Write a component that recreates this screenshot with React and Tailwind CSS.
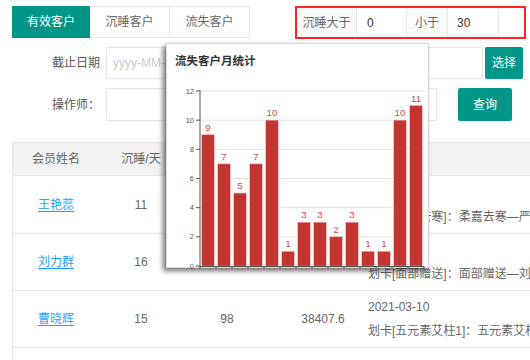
import React from "react";

const vals = [9, 7, 5, 7, 10, 1, 3, 3, 2, 3, 1, 1, 10, 11];

function Chart() {
  const X0 = 33;
  const Y0 = 192;
  const unit = 175 / 12;
  const pitch = 16;
  const W = X0 + pitch * vals.length;
  return (
    <svg width="263" height="195" viewBox="0 0 263 195" className="block">
      {[2, 4, 6, 8, 10, 12].map((v) => (
        <line key={"g" + v} x1={X0} x2={W} y1={Y0 - v * unit} y2={Y0 - v * unit} stroke="#e3e3e3" strokeWidth="1" />
      ))}
      {[0, 2, 4, 6, 8, 10, 12].map((v) => (
        <g key={"y" + v}>
          <line x1={X0 - 4} x2={X0} y1={Y0 - v * unit} y2={Y0 - v * unit} stroke="#555" strokeWidth="1" />
          <text x={X0 - 6} y={Y0 - v * unit + 2.6} textAnchor="end" fontSize="7.5" fill="#555" fontFamily="Liberation Sans, sans-serif">
            {v}
          </text>
        </g>
      ))}
      {vals.map((v, i) => {
        const x = X0 + pitch * i + 1.8;
        const h = v * unit;
        return (
          <g key={"b" + i}>
            <rect x={x} y={Y0 - h} width={12.4} height={h} fill="#c23531" stroke="#e9a3a1" strokeWidth="0.5" />
            <text x={x + 6.2} y={Y0 - h - 4} textAnchor="middle" fontSize="9.8" fill="#d04a47" fontFamily="Liberation Sans, sans-serif">
              {v}
            </text>
          </g>
        );
      })}
      <line x1={X0} x2={X0} y1={Y0 - 12 * unit - 1} y2={Y0 + 0.5} stroke="#555" strokeWidth="1" />
      <line x1={X0} x2={W} y1={Y0 + 0.5} y2={Y0 + 0.5} stroke="#555" strokeWidth="1" />
      {Array.from({ length: vals.length + 1 }).map((_, i) => (
        <line key={"t" + i} x1={X0 + pitch * i} x2={X0 + pitch * i} y1={Y0} y2={Y0 + 4} stroke="#555" strokeWidth="1" />
      ))}
    </svg>
  );
}

const rows = [
  { name: "王艳蕊", days: "11", c3: "102", c4: "12580.0", date: "2021-03-12", text: "划卡[柔嘉去寒]：柔嘉去寒—严冬暖宫调理疗程", h: "h-[58px]" },
  { name: "刘力群", days: "16", c3: "75", c4: "9620.5", date: "2021-03-11", text: "划卡[面部赠送]：面部赠送—刘氏补水护理", h: "h-[57px]" },
  { name: "曹晓辉", days: "15", c3: "98", c4: "38407.6", date: "2021-03-10", text: "划卡[五元素艾柱1]：五元素艾柱养生疗程", h: "h-[57px]" },
];

export default function App() {
  return (
    <div className="relative w-[530px] h-[360px] overflow-hidden bg-white text-[12px] text-[#666] font-['Liberation_Sans','Noto_Sans_CJK_SC',sans-serif]">
      {/* top row */}
      <div className="flex items-start justify-between pl-[12px] pr-[4px] pt-[6px]">
        <div className="flex h-[32px] border border-[#e6e6e6]">
          <div className="w-[78px] -my-px -ml-px bg-[#009688] text-white flex items-center justify-center">有效客户</div>
          <div className="w-[80px] border-r border-[#e6e6e6] flex items-center justify-center">沉睡客户</div>
          <div className="w-[79px] flex items-center justify-center">流失客户</div>
        </div>
        <div className="flex h-[33px] w-[231px] border-2 border-[#f22] text-[#666]">
          <div className="w-[60px] bg-[#fafafa] border-r border-[#e6e6e6] flex items-center justify-center">沉睡大于</div>
          <div className="w-[50px] border-r border-[#e6e6e6] flex items-center pl-[10px] text-[#333]">0</div>
          <div className="w-[41px] bg-[#fafafa] border-r border-[#e6e6e6] flex items-center justify-center">小于</div>
          <div className="w-[51px] border-r border-[#e6e6e6] flex items-center pl-[9px] text-[#333]">30</div>
          <div className="flex-1"></div>
        </div>
      </div>

      {/* form row 1 */}
      <div className="flex items-center mt-[8px] h-[32px]">
        <div className="w-[100px] text-right text-[#555]">截止日期</div>
        <div className="ml-[6px] w-[377px] h-[32px] border border-[#e6e6e6] rounded-[2px] flex items-center pl-[6px] text-[#ccc]">yyyy-MM-dd</div>
        <div className="ml-[2px] w-[38px] h-[32px] bg-[#009688] text-white rounded-[2px] flex items-center justify-center">选择</div>
      </div>

      {/* form row 2 */}
      <div className="flex items-center mt-[9px] h-[33px]">
        <div className="w-[100px] text-right text-[#555]">操作师：</div>
        <div className="ml-[6px] w-[331px] h-[33px] border border-[#e6e6e6] rounded-[2px]"></div>
        <div className="ml-[21px] w-[54px] h-[33px] bg-[#009688] text-white rounded-[2px] flex items-center justify-center">查询</div>
      </div>

      {/* table */}
      <div className="ml-[12px] mt-[21px] w-[640px] border-l border-t border-[#e6e6e6]">
        <div className="grid grid-cols-[86px_84px_88px_100px_1fr] h-[33px] bg-[#f2f2f2] border-b border-[#e6e6e6] items-center">
          <div className="text-center">会员姓名</div>
          <div className="text-center">沉睡/天</div>
          <div className="text-center">消费次数</div>
          <div className="text-center">消费金额</div>
          <div>最后消费</div>
        </div>
        {rows.map((r) => (
          <div key={r.name} className={"grid grid-cols-[86px_84px_88px_100px_1fr] border-b border-[#e6e6e6] items-center " + r.h}>
            <div className="text-center">
              <span className="text-[#1e9fff] underline underline-offset-2">{r.name}</span>
            </div>
            <div className="text-center">{r.days}</div>
            <div className="text-center">{r.c3}</div>
            <div className="text-center pl-[4px]">{r.c4}</div>
            <div className="-ml-[3px] flex flex-col leading-[24px] whitespace-nowrap">
              <div>{r.date}</div>
              <div>{r.text}</div>
            </div>
          </div>
        ))}
        <div className="h-[20px]"></div>
      </div>

      {/* popup */}
      <div className="absolute left-[166px] top-[43px] w-[263px] h-[225px] bg-white border border-[#d8d8d8] shadow-[-3px_3px_5px_rgba(0,0,0,0.55)]">
        <div className="h-[30px] pt-[9px] pl-[8px] leading-[16px] text-[11.5px] font-bold text-[#333]">流失客户月统计</div>
        <Chart />
      </div>
    </div>
  );
}
